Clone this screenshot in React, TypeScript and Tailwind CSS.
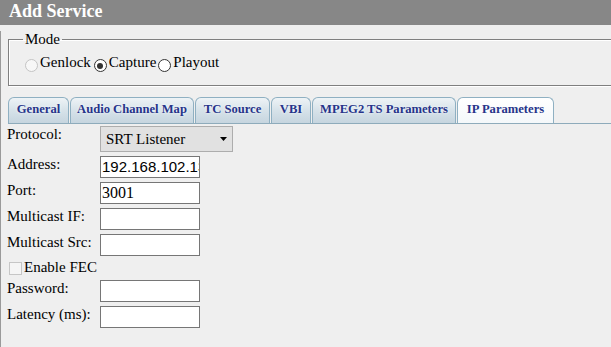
import React from "react";

const tabs = [
  { label: "General", w: "w-[61px]", active: false },
  { label: "Audio Channel Map", w: "w-[124px]", active: false },
  { label: "TC Source", w: "w-[75px]", active: false },
  { label: "VBI", w: "w-[40px]", active: false },
  { label: "MPEG2 TS Parameters", w: "w-[144px]", active: false },
  { label: "IP Parameters", w: "w-[97px]", active: true },
];

function Radio({ state }: { state: "disabled" | "checked" | "unchecked" }) {
  if (state === "disabled") {
    return (
      <span className="mt-[5px] mr-[2px] inline-block h-[13px] w-[13px] shrink-0 rounded-full border border-[#c4c4c4] bg-[#f7f7f7]" />
    );
  }
  return (
    <span className="mt-[5px] mr-[2px] flex h-[13px] w-[13px] shrink-0 items-center justify-center rounded-full border border-[#333] bg-white">
      {state === "checked" && <span className="h-[6px] w-[6px] rounded-full bg-[#333]" />}
    </span>
  );
}

function InputRow({ label, value, sans }: { label: string; value?: string; sans?: boolean }) {
  return (
    <div className="flex h-[26px] items-start pt-[2px]">
      <div className="w-[93px] text-[15px] leading-[17px]">{label}</div>
      <input
        readOnly
        value={value ?? ""}
        className={
          "block h-[22px] w-[100px] border border-[#767676] bg-white pl-[1px] pr-0 text-black outline-none " +
          (sans ? "font-['Liberation_Sans',Arial,sans-serif] text-[15px]" : "font-['Liberation_Serif','Times_New_Roman',serif] text-[16px]")
        }
      />
    </div>
  );
}

export default function App() {
  return (
    <div className="h-[347px] w-full overflow-hidden bg-[#efefef] font-['Liberation_Serif','Times_New_Roman',serif] text-black">
      <div className="h-[25px] bg-[#878787] pl-[9px] text-[18px] font-bold leading-[23px] text-white">
        Add Service
      </div>
      <div className="h-[322px] border-l border-[#9a9a9a] pl-[7px]">
        <fieldset className="mt-[6px] w-[700px] border border-[#7f7f7f] pb-[13px] pl-[14px] pt-[6px] shadow-[inset_1px_1px_0_#fff,1px_1px_0_#fff]">
          <legend className="px-[2px] text-[15px] leading-[17px]">Mode</legend>
          <div className="ml-[2px] flex items-start text-[15px] leading-[17px]">
            <Radio state="disabled" />
            <span>Genlock</span>
            <span className="ml-[3px] flex items-start">
              <Radio state="checked" />
              <span>Capture</span>
            </span>
            <span className="ml-[2px] flex items-start">
              <Radio state="unchecked" />
              <span>Playout</span>
            </span>
          </div>
        </fieldset>

        <div className="mt-[11px] flex items-end gap-[1px] border-b border-[#8eabbb]">
          {tabs.map((t) => (
            <div
              key={t.label}
              className={
                "flex h-[26px] shrink-0 justify-center rounded-t-[6px] border border-b-0 border-[#8fb0c2] text-[12.6px] font-bold leading-[23px] text-[#26348a] [text-shadow:0_0_3px_#fff] " +
                t.w +
                " " +
                (t.active
                  ? "bg-linear-to-b from-white to-[#f4f8fa]"
                  : "bg-linear-to-b from-[#eef3f6] via-[#d6e2e9] to-[#c6d5df]")
              }
            >
              {t.label}
            </div>
          ))}
        </div>

        <div className="-ml-[1px]">
          <div className="flex h-[30px] items-start pt-[2px]">
            <div className="w-[93px] text-[15px] leading-[17px]">Protocol:</div>
            <div className="flex h-[26px] w-[133px] items-center justify-between border border-[#adadad] bg-[#e1e1e1] pl-[5px] pr-[5px] text-[15px] leading-[17px]">
              <span>SRT Listener</span>
              <svg width="7" height="4" viewBox="0 0 7 4">
                <path d="M0 0H7L3.5 4Z" fill="#000" />
              </svg>
            </div>
          </div>
          <InputRow label="Address:" value="192.168.102.13" sans />
          <InputRow label="Port:" value="3001" />
          <InputRow label="Multicast IF:" />
          <InputRow label="Multicast Src:" />
          <div className="flex h-[20px] items-start">
            <span className="ml-[2px] mt-[4px] mr-[2px] inline-block h-[13px] w-[13px] border border-[#c6c6c6] bg-[#f5f5f5]" />
            <span className="mt-[1px] text-[15px] leading-[17px]">Enable FEC</span>
          </div>
          <InputRow label="Password:" />
          <InputRow label="Latency (ms):" />
        </div>
      </div>
    </div>
  );
}
